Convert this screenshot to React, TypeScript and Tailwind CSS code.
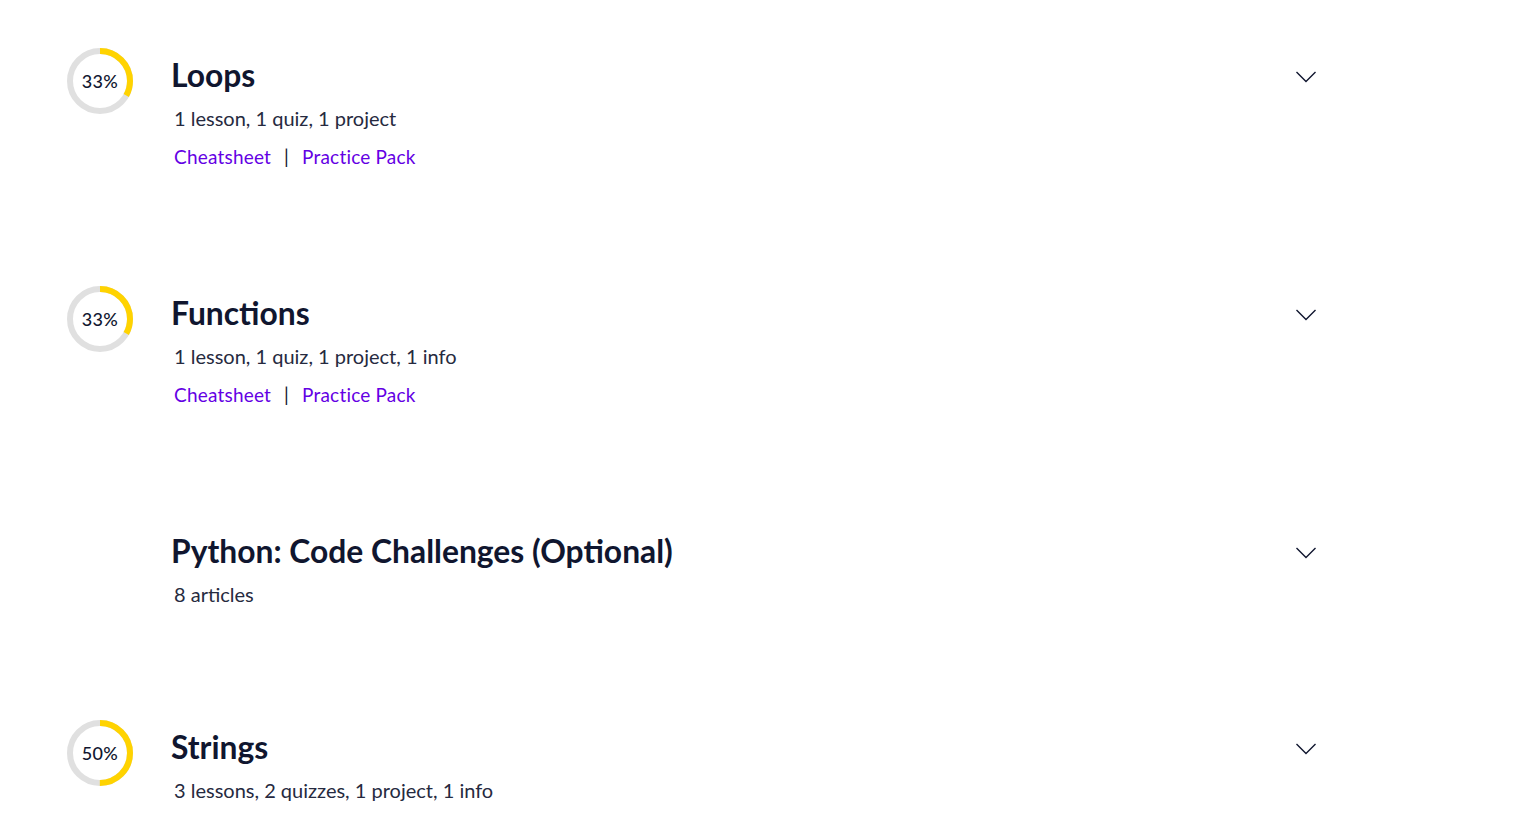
import React from "react";

type Item = {
  title: string;
  sub: string;
  pct?: number;
  links?: boolean;
  pb: string;
};

const items: Item[] = [
  { title: "Loops", sub: "1 lesson, 1 quiz, 1 project", pct: 33, links: true, pb: "pb-[116px]" },
  { title: "Functions", sub: "1 lesson, 1 quiz, 1 project, 1 info", pct: 33, links: true, pb: "pb-[116px]" },
  { title: "Python: Code Challenges (Optional)", sub: "8 articles", pb: "pb-[112px]" },
  { title: "Strings", sub: "3 lessons, 2 quizzes, 1 project, 1 info", pct: 50, pb: "pb-[40px]" },
];

function Ring({ pct }: { pct: number }) {
  const r = 30;
  const c = 2 * Math.PI * r;
  const dash = (pct / 100) * c;
  return (
    <div className="relative w-[66px] h-[66px]">
      <svg width="66" height="66" viewBox="0 0 66 66" className="absolute inset-0">
        <circle cx="33" cy="33" r={r} fill="none" stroke="#e0e0e0" strokeWidth="6" />
        <circle
          cx="33"
          cy="33"
          r={r}
          fill="none"
          stroke="#ffd300"
          strokeWidth="6"
          strokeDasharray={`${dash} ${c}`}
          transform="rotate(-90 33 33)"
        />
      </svg>
      <div className="absolute inset-0 flex items-center justify-center text-[18px] font-medium tracking-[0.3px] text-[#10162f]">
        {pct}%
      </div>
    </div>
  );
}

function Chevron() {
  return (
    <svg width="22" height="14" viewBox="0 0 22 14" fill="none">
      <path d="M1.5 2 L11 11.5 L20.5 2" stroke="#10162f" strokeWidth="1.4" />
    </svg>
  );
}

export default function App() {
  return (
    <div
      className="w-[1531px] h-[814px] overflow-hidden bg-white pt-[48px]"
      style={{ fontFamily: "Lato, 'Noto Sans', sans-serif" }}
    >
      {items.map((it) => (
        <div key={it.title} className={`flex items-start pl-[67px] ${it.pb}`}>
          <div className="w-[66px] h-[66px] shrink-0">{it.pct !== undefined && <Ring pct={it.pct} />}</div>
          <div className="ml-[38px] w-[1146px] flex flex-col pt-[9px]">
            <div className="flex items-center justify-between h-[36px]">
              <h2 className="text-[31.8px] leading-[36px] font-bold text-[#10162f]">{it.title}</h2>
              <div className="mt-[4px]">
                <Chevron />
              </div>
            </div>
            <div className="mt-[11px] pl-[3px] text-[20px] leading-[28px] text-[#262a40]">{it.sub}</div>
            {it.links && (
              <div className="mt-[12px] pl-[3px] flex items-center text-[19px] tracking-[0.2px] leading-[26px]">
                <span className="text-[#6400e4]">Cheatsheet</span>
                <span className="mx-[13px] text-[#10162f]">|</span>
                <span className="text-[#6400e4]">Practice Pack</span>
              </div>
            )}
          </div>
        </div>
      ))}
    </div>
  );
}
